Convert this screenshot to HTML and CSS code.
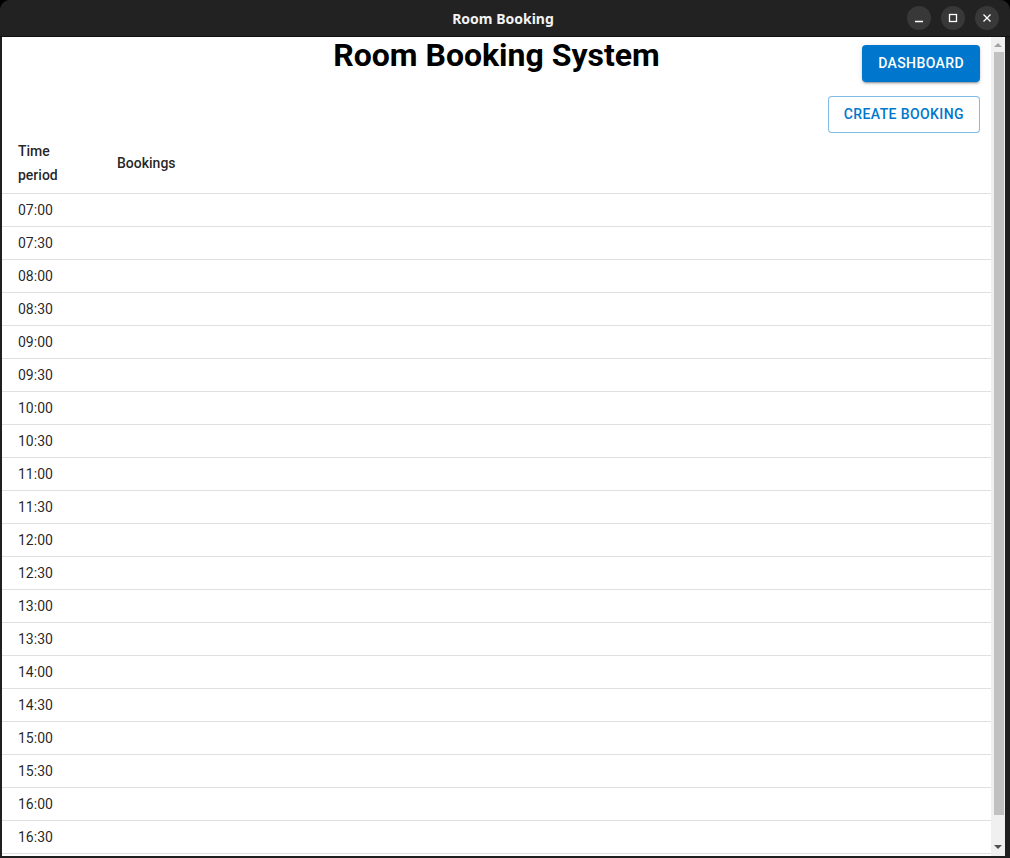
FILE: index.html
```html
<!DOCTYPE html>
<html>
<head>
<meta charset="utf-8">
<title>Room Booking</title>
<link rel="stylesheet" href="styles.css">
</head>
<body>
<div class="window">
  <div class="titlebar">
    <div></div>
    <div class="title">Room Booking</div>
    <div class="controls">
      <span class="ctl"><svg width="10" height="10" viewBox="0 0 10 10"><path d="M1 8.5h8" stroke="#fff" stroke-width="1.3"/></svg></span>
      <span class="ctl"><svg width="10" height="10" viewBox="0 0 10 10"><rect x="1.5" y="1.5" width="7" height="7" fill="none" stroke="#fff" stroke-width="1.3"/></svg></span>
      <span class="ctl"><svg width="10" height="10" viewBox="0 0 10 10"><path d="M1.5 1.5l7 7M8.5 1.5l-7 7" stroke="#fff" stroke-width="1.3"/></svg></span>
    </div>
  </div>
  <div class="client">
    <div class="page">
      <div class="header">
        <div></div>
        <h1>Room Booking System</h1>
        <div class="header-right"><button class="btn btn-contained">Dashboard</button></div>
      </div>
      <div class="actions"><button class="btn btn-outlined">Create Booking</button></div>
      <table class="table">
        <thead>
          <tr><th class="col-time">Time period</th><th>Bookings</th></tr>
        </thead>
        <tbody>
          <tr><td>07:00</td><td></td></tr>
          <tr><td>07:30</td><td></td></tr>
          <tr><td>08:00</td><td></td></tr>
          <tr><td>08:30</td><td></td></tr>
          <tr><td>09:00</td><td></td></tr>
          <tr><td>09:30</td><td></td></tr>
          <tr><td>10:00</td><td></td></tr>
          <tr><td>10:30</td><td></td></tr>
          <tr><td>11:00</td><td></td></tr>
          <tr><td>11:30</td><td></td></tr>
          <tr><td>12:00</td><td></td></tr>
          <tr><td>12:30</td><td></td></tr>
          <tr><td>13:00</td><td></td></tr>
          <tr><td>13:30</td><td></td></tr>
          <tr><td>14:00</td><td></td></tr>
          <tr><td>14:30</td><td></td></tr>
          <tr><td>15:00</td><td></td></tr>
          <tr><td>15:30</td><td></td></tr>
          <tr><td>16:00</td><td></td></tr>
          <tr><td>16:30</td><td></td></tr>
        </tbody>
      </table>
    </div>
    <div class="scrollbar">
      <div class="arrow-up"></div>
      <div class="thumb"></div>
      <div class="arrow-down"></div>
    </div>
  </div>
</div>
</body>
</html>
```

FILE: styles.css
```css
* { box-sizing: border-box; }
html, body { margin: 0; padding: 0; background: #000; }
body { width: 1010px; height: 858px; overflow: hidden; font-family: Roboto, "Liberation Sans", sans-serif; }

.window {
  width: 1010px;
  height: 858px;
  display: flex;
  flex-direction: column;
  background: #1f1f1f;
  border-radius: 10px 10px 0 0;
  overflow: hidden;
}

.titlebar {
  height: 37px;
  flex: none;
  display: grid;
  grid-template-columns: 1fr auto 1fr;
  align-items: center;
  background: #222222;
  border-bottom: 1px solid #111;
  padding-right: 4px;
}
.title {
  color: #f2f2f2;
  font-family: "Noto Sans", "DejaVu Sans", sans-serif;
  font-weight: 700;
  font-size: 14px;
}
.controls {
  display: flex;
  justify-content: flex-end;
  gap: 10px;
  padding-right: 7px;
}
.ctl {
  width: 24px;
  height: 24px;
  border-radius: 50%;
  background: #383838;
  display: flex;
  align-items: center;
  justify-content: center;
}

.client {
  flex: 1;
  display: flex;
  margin: 0 5px 2px 2px;
  background: #fff;
  overflow: hidden;
  min-height: 0;
}
.page {
  flex: 1;
  overflow: hidden;
  color: rgba(0,0,0,0.87);
}

.header {
  display: grid;
  grid-template-columns: 1fr auto 1fr;
  align-items: start;
}
.header h1 {
  margin: 0;
  font-size: 32px;
  font-weight: 700;
  color: #000;
  line-height: 37px;
  white-space: nowrap;
}
.header-right {
  display: flex;
  justify-content: flex-end;
  padding: 8px 11px 0 0;
}
.actions {
  display: flex;
  justify-content: flex-end;
  padding: 14px 11px 0 0;
}

.btn {
  font-family: Roboto, sans-serif;
  font-size: 14px;
  font-weight: 500;
  letter-spacing: 0.4px;
  text-transform: uppercase;
  line-height: 25px;
  border-radius: 4px;
  cursor: pointer;
}
.btn-contained {
  background: #0077cc;
  color: #fff;
  border: none;
  padding: 6px 16px;
  box-shadow: 0 3px 1px -2px rgba(0,0,0,0.2), 0 2px 2px 0 rgba(0,0,0,0.14), 0 1px 5px 0 rgba(0,0,0,0.12);
}
.btn-outlined {
  background: #fff;
  color: #0077cc;
  border: 1px solid rgba(0,119,204,0.5);
  padding: 5px 15px;
}

.table {
  width: 100%;
  border-collapse: collapse;
  font-size: 14px;
}
.table th, .table td {
  text-align: left;
  padding: 6px 16px;
  border-bottom: 1px solid #e0e0e0;
  vertical-align: middle;
}
.table th {
  font-weight: 500;
  line-height: 24px;
}
.table td {
  font-weight: 400;
  line-height: 20px;
}
.col-time { width: 99px; }

.scrollbar {
  width: 14px;
  flex: none;
  background: #f0f0f0;
  display: flex;
  flex-direction: column;
  align-items: center;
  padding: 5px 0 5px;
}
.arrow-up {
  width: 0; height: 0;
  border-left: 4px solid transparent;
  border-right: 4px solid transparent;
  border-bottom: 4px solid #a3a3a3;
  margin-top: 1px;
}
.thumb {
  width: 10px;
  margin: 5px 0 0 1px;
  height: 763px;
  background: #c1c1c1;
}
.arrow-down {
  width: 0; height: 0;
  border-left: 4px solid transparent;
  border-right: 4px solid transparent;
  border-top: 4px solid #505050;
  margin-top: auto;
  margin-bottom: 2px;
}
```
